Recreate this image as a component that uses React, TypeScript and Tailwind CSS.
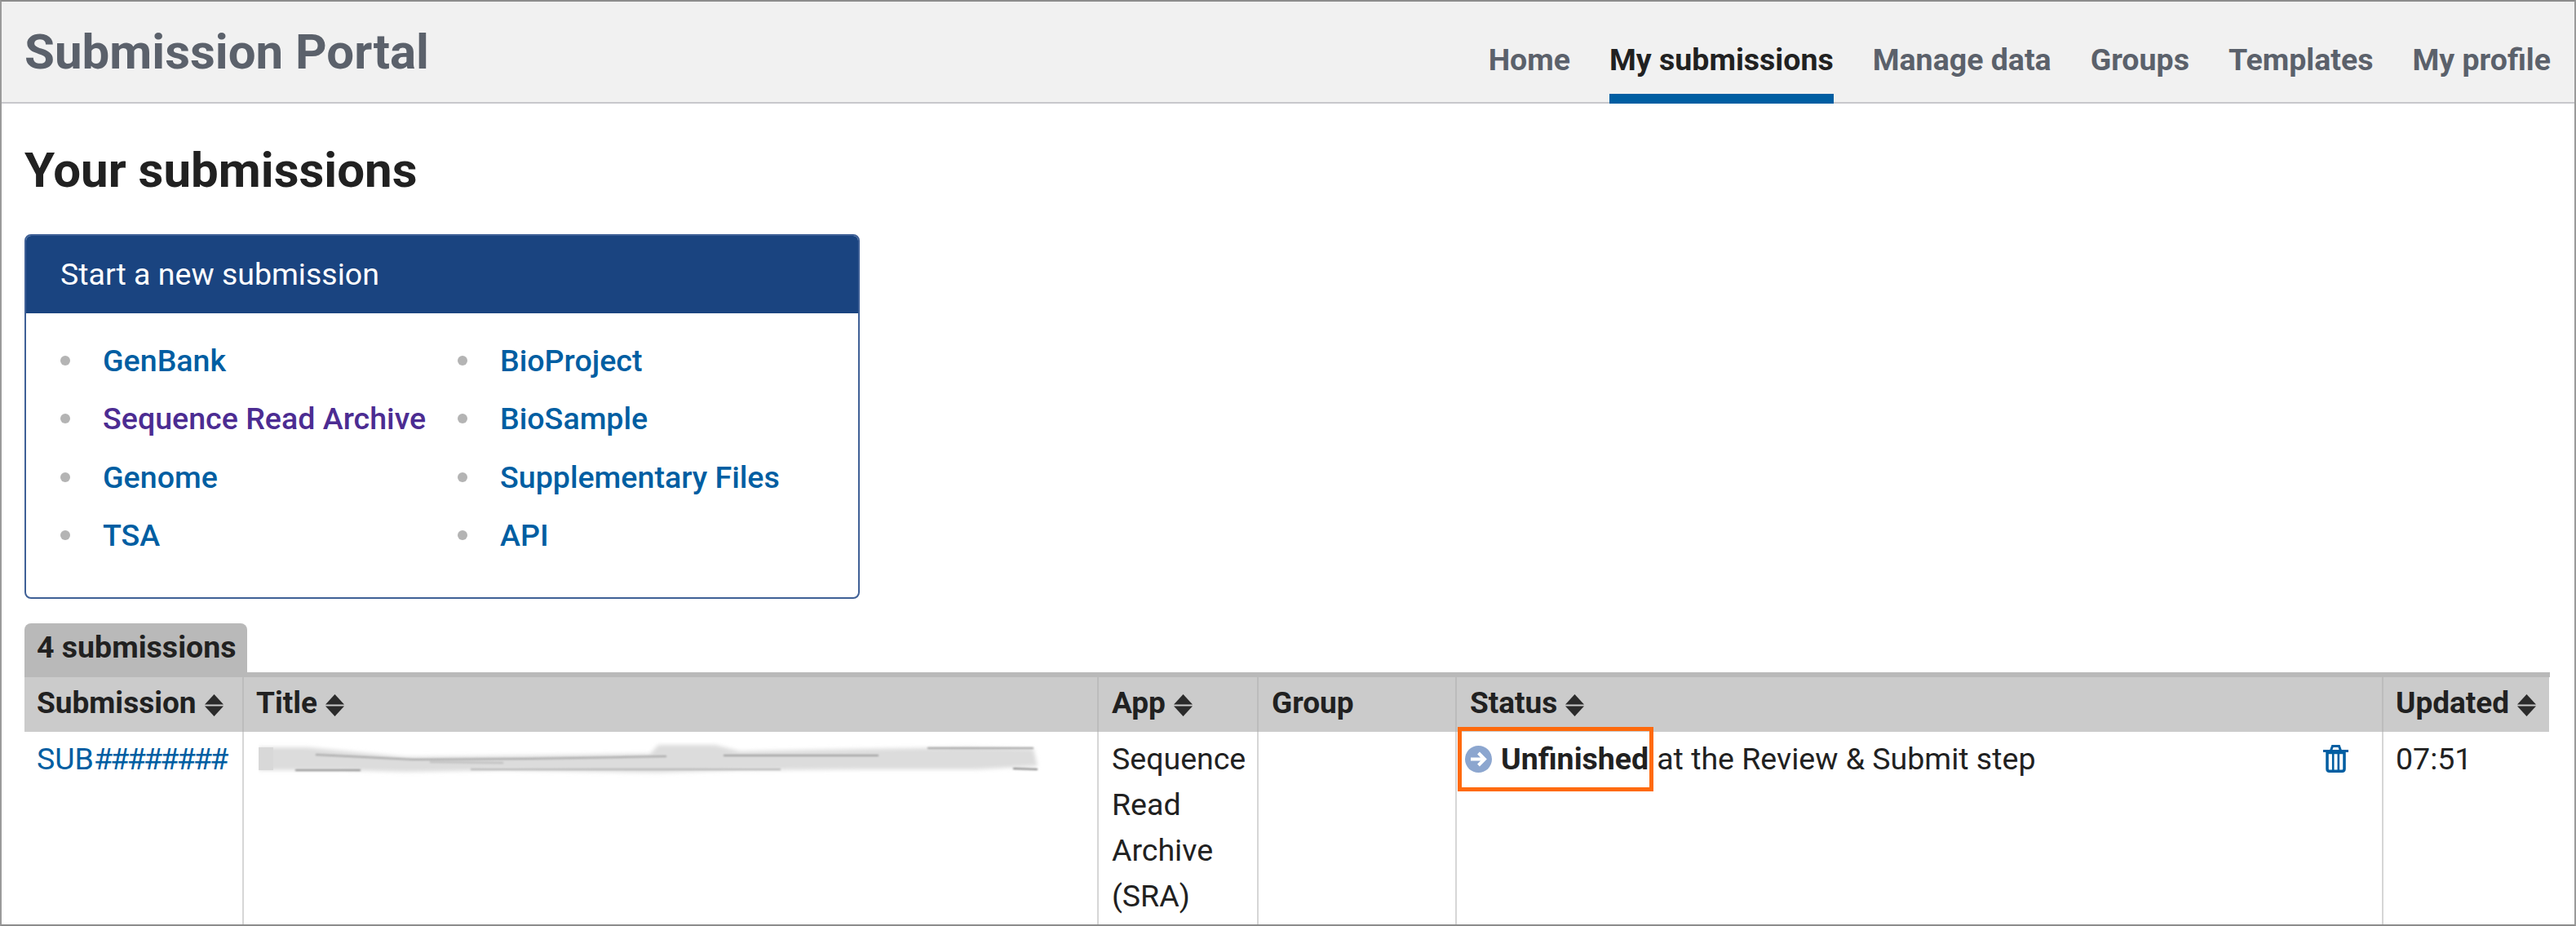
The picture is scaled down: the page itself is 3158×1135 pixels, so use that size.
const navLinks = ['Home', 'My submissions', 'Manage data', 'Groups', 'Templates', 'My profile']

const leftLinks = ['GenBank', 'Sequence Read Archive', 'Genome', 'TSA']
const rightLinks = ['BioProject', 'BioSample', 'Supplementary Files', 'API']

function SortIcon() {
  return (
    <svg width="23" height="27" viewBox="0 0 23 27" className="ml-[10px] inline-block align-[-4px]">
      <path d="M11.5 0 L23 12.5 L0 12.5 Z" fill="#2b2b2b" />
      <path d="M0 14.5 L23 14.5 L11.5 27 Z" fill="#2b2b2b" />
    </svg>
  )
}

function StatusIcon() {
  return (
    <svg width="33" height="33" viewBox="0 0 33 33" className="shrink-0">
      <circle cx="16.5" cy="16.5" r="16.5" fill="#8ca6cf" />
      <path d="M7 16.5 H23 M16.5 9 L24 16.5 L16.5 24" fill="none" stroke="#fff" strokeWidth="4" />
    </svg>
  )
}

function TrashIcon() {
  return (
    <svg width="31" height="34" viewBox="0 0 31 34" fill="none" stroke="#005ea2">
      <path d="M0 7.5 H31" strokeWidth="3" />
      <path d="M9.5 7 L11.5 1.5 H19.5 L21.5 7" strokeWidth="3" />
      <path d="M5 8 V29.5 Q5 32.2 7.7 32.2 H23.3 Q26 32.2 26 29.5 V8" strokeWidth="3.5" />
      <path d="M12.2 9 V31 M18.8 9 V31" strokeWidth="2.6" />
      <path d="M5 10 H26" strokeWidth="2.5" />
    </svg>
  )
}

function RedactedTitle() {
  return (
    <svg width="960" height="50" viewBox="0 0 960 50" className="block">
      <defs>
        <filter id="smear" x="-5%" y="-40%" width="110%" height="180%">
          <feGaussianBlur stdDeviation="2.5" />
        </filter>
        <filter id="streak" x="-5%" y="-200%" width="110%" height="500%">
          <feGaussianBlur stdDeviation="0.8" />
        </filter>
      </defs>
      <path
        d="M0 7 L60 7 L110 12 L180 19 L340 17 L480 15 L490 4 L560 4 L590 12 L740 9 L870 7 L950 9 L955 30 L880 34 L740 34 L590 35 L490 38 L300 35 L180 37 L100 35 L0 35 Z"
        fill="#dcdcdc"
        filter="url(#smear)"
      />
      <rect x="0" y="7" width="18" height="28" fill="#d8d8d8" />
      <g filter="url(#streak)" fill="none" strokeWidth="2">
        <path d="M70 16 L190 22 L330 21 L500 18" stroke="#a6a6a6" />
        <path d="M45 35 L125 35" stroke="#8a8a8a" />
        <path d="M210 25 L300 26" stroke="#bcbcbc" />
        <path d="M260 34 L420 34 L640 34" stroke="#b4b4b4" />
        <path d="M570 17 L760 17" stroke="#9e9e9e" />
        <path d="M820 8 L950 8" stroke="#a0a0a0" />
        <path d="M925 33 L955 34" stroke="#7e7e7e" />
      </g>
    </svg>
  )
}

function LinkColumn({ links, width }: { links: string[]; width: string }) {
  return (
    <ul className={`flex flex-col ${width}`}>
      {links.map((link) => (
        <li key={link} className="flex h-[71.5px] items-center">
          <span className="ml-[5px] h-[12px] w-[12px] shrink-0 rounded-full bg-[#b4b4b4]" />
          <a
            href="#"
            className={`ml-[40px] whitespace-nowrap text-[37.6px] font-medium ${
              link === 'Sequence Read Archive' ? 'text-[#4c2c92]' : 'text-[#005ea2]'
            }`}
          >
            {link}
          </a>
        </li>
      ))}
    </ul>
  )
}

export default function App() {
  return (
    <div className="h-[1135px] w-[3158px] overflow-hidden border-x-2 border-t-2 border-b-2 border-x-[#9a9a9a] border-y-[#8c8c8c] bg-white font-['Roboto',sans-serif] text-[#212121]">
      <header className="flex h-[125px] justify-between border-b-2 border-[#c8c8cc] bg-[#f1f1f1] pl-[28px] pr-[29px]">
        <h1 className="pt-[28px] text-[60px] leading-[68px] font-bold text-[#5b616b]">Submission Portal</h1>
        <nav className="flex gap-[48px]">
          {navLinks.map((link) => (
            <a
              key={link}
              href="#"
              className={`h-[125px] whitespace-nowrap border-b-[12px] pt-[49px] text-[37.5px] leading-[44px] font-bold ${
                link === 'My submissions' ? 'border-[#005ea2] text-[#212121]' : 'border-transparent text-[#5b616b]'
              }`}
            >
              {link}
            </a>
          ))}
        </nav>
      </header>

      <main className="pl-[28px] pr-[30px]">
        <h2 className="pt-[48px] text-[60px] leading-[68px] font-bold">Your submissions</h2>

        <section className="mt-[44px] h-[447px] w-[1024px] overflow-hidden rounded-lg border-2 border-[#3f6096]">
          <div className="flex h-[95px] items-center bg-[#1a4480] pl-[42px] text-[37.5px] text-white">Start a new submission</div>
          <div className="flex pl-[37px] pt-[22px]">
            <LinkColumn links={leftLinks} width="w-[487px]" />
            <LinkColumn links={rightLinks} width="w-[440px]" />
          </div>
        </section>

        <div className="mt-[30px] flex h-[60px] w-[273px] items-center rounded-t-lg bg-[#b9b9b9] pb-[2px] pl-[15px] text-[37.5px] font-bold">4 submissions</div>
        <div className="h-[6px] bg-[#b9b9b9]" />

        <table className="w-[3095px] table-fixed border-collapse text-[37.5px] leading-[56px]">
          <colgroup>
            <col className="w-[268px]" />
            <col className="w-[1048px]" />
            <col className="w-[196px]" />
            <col className="w-[243px]" />
            <col className="w-[1136px]" />
            <col className="w-[204px]" />
          </colgroup>
          <thead>
            <tr className="h-[67px] bg-[#cbcbcb] text-left text-[37px] font-bold">
              <th className="pb-[3px] pl-[15px] font-bold whitespace-nowrap">Submission<SortIcon /></th>
              <th className="border-l-2 border-[#bcbcbc] pb-[3px] pl-[15px] font-bold">Title<SortIcon /></th>
              <th className="border-l-2 border-[#bcbcbc] pb-[3px] pl-[16px] font-bold">App<SortIcon /></th>
              <th className="border-l-2 border-[#bcbcbc] pb-[3px] pl-[16px] font-bold">Group</th>
              <th className="border-l-2 border-[#bcbcbc] pb-[3px] pl-[16px] font-bold">Status<SortIcon /></th>
              <th className="border-l-2 border-[#bcbcbc] pb-[3px] pl-[15px] font-bold whitespace-nowrap">Updated<SortIcon /></th>
            </tr>
          </thead>
          <tbody>
            <tr className="align-top">
              <td className="pl-[15px] pt-[5px] whitespace-nowrap text-[#005ea2]">
                SUB<span className="tracking-[-2.75px]">########</span>
              </td>
              <td className="border-l-2 border-[#d6d6d6] pl-[18px] pt-[12px]">
                <RedactedTitle />
              </td>
              <td className="border-l-2 border-[#d6d6d6] pl-[16px] pt-[5px] pb-[7px]">
                Sequence
                <br />
                Read
                <br />
                Archive
                <br />
                (SRA)
              </td>
              <td className="border-l-2 border-[#d6d6d6]" />
              <td className="border-l-2 border-[#d6d6d6]">
                <div className="relative flex items-center pl-[10px] pr-[41px] pt-[5px]">
                  <StatusIcon />
                  <strong className="ml-[11px] font-bold">Unfinished</strong>
                  <span className="ml-[10px]">at the Review &amp; Submit step</span>
                  <span className="ml-auto flex">
                    <TrashIcon />
                  </span>
                  <div className="absolute left-[1px] top-[-6px] h-[79px] w-[240px] border-[5px] border-[#ff6a0d]" />
                </div>
              </td>
              <td className="border-l-2 border-[#d6d6d6] pl-[15px] pt-[5px]">07:51</td>
            </tr>
          </tbody>
        </table>
      </main>
    </div>
  )
}
